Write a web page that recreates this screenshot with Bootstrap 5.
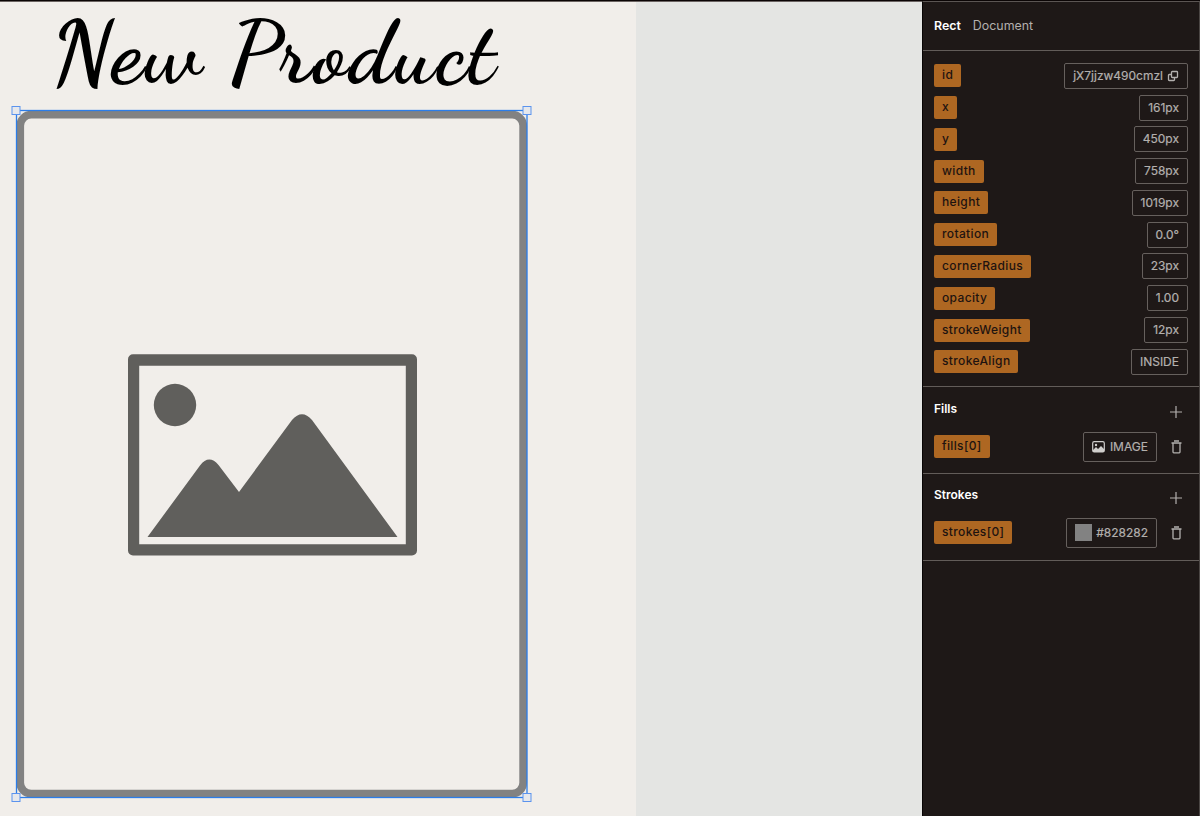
<!DOCTYPE html>
<html lang="en">
<head>
<meta charset="utf-8">
<title>Design editor</title>
<link href="https://cdn.jsdelivr.net/npm/bootstrap@5.3.0/dist/css/bootstrap.min.css" rel="stylesheet">
<style>
body{width:1200px;height:816px;overflow:hidden;background:#e4e5e3;font-family:Inter,"Liberation Sans",sans-serif;font-size:12px;line-height:16px}
.editor{height:816px;border-top:1px solid #0b0505;box-shadow:inset 0 1px #6b6462}
.artboard{width:636px;background:#f1eeea;border-top:1px solid #6b6462}
.artwork{width:636px;height:814px;display:block}
.script-title{font-family:"Dancing Script","Liberation Serif",cursive;font-weight:700;font-size:86px;letter-spacing:1.900px}
.panel{width:278px;background:#1e1817;border-left:1px solid #080505;border-right:1px solid #4b4644;border-top:1px solid #5b5553;color:#b3b0ae}
.rule{border-bottom:1px solid #625c59}
.tabs-row{height:48.500px;padding-left:11px;font-size:12.4px}
.tabs-row .heading{font-size:12.400px}
.heading{color:#fff;font-weight:600;font-size:12px}
.props{height:336.500px;padding:9.500px 11px 0 11px}
.prop{height:31.78px}
.tag{background:#ae6722;color:#1e1310;border-radius:2px;height:23px;padding:0 8px;font-weight:500;font-size:12px;letter-spacing:.36px;line-height:22.500px}
.value{border:1px solid #66605d;border-radius:2px;height:26px;padding:0 8px;line-height:24px;white-space:nowrap;-webkit-text-stroke:.2px #b3b0ae}
.value.tall{height:30px;margin-right:14px}
.group{height:87px;padding:0 11px}
.group-head{height:44px;padding-top:14px}
.group-row{height:30px;margin-top:.5px}
.strokes .group-head{height:43px;padding-top:13px}
.swatch{width:17px;height:17px;background:#828282}
.plus{margin-right:5px}
.bin{margin-right:6px}
svg{flex:none}
</style>
</head>
<body>
<div class="editor d-flex justify-content-between">
  <main class="artboard">
    <svg class="artwork" viewBox="0 2 636 814">
      <text class="script-title" transform="translate(51.500 81) scale(1.045 1.015)">New Product</text>
      <rect x="20.2" y="114.7" width="503" height="679" rx="11" fill="none" stroke="#828282" stroke-width="7.8"/>
      <rect x="16.5" y="110.5" width="510.500" height="687" fill="none" stroke="#2b7de9" stroke-width="1.3"/>
      <g fill="#e6e8ec" stroke="#5b93ee">
        <rect x="12" y="106.500" width="8" height="8"/><rect x="523" y="106.500" width="8" height="8"/>
        <rect x="12" y="793.500" width="8" height="8"/><rect x="523" y="793.500" width="8" height="8"/>
      </g>
      <g fill="#605f5c">
        <path fill-rule="evenodd" d="M133 354.300H412a5 5 0 0 1 5 5V550.500a5 5 0 0 1-5 5H133a5 5 0 0 1-5-5V359.300a5 5 0 0 1 5-5ZM139.200 365.700V544.300H405.800V365.700Z"/>
        <circle cx="175" cy="405" r="21.200"/>
        <path d="M147.500 537 200 465.500Q209 454 218.500 465L239 492 292 420Q302 408.500 312 420L397.500 537Z"/>
      </g>
    </svg>
  </main>
  <aside class="panel">
    <div class="tabs-row rule d-flex align-items-center gap-2"><span class="heading me-1">Rect</span><span>Document</span></div>
    <section class="props rule">
      <div class="prop d-flex align-items-center justify-content-between"><span class="tag">id</span><span class="value d-flex align-items-center gap-1">jX7jjzw490cmzl
        <svg width="12" height="12" viewBox="0 0 12 12" fill="none" stroke="#b3b0ae" stroke-width="1.300"><rect x="4.500" y="1.500" width="6" height="6" rx=".8"/><path d="M4.500 4.500H2.300a.8.8 0 0 0-.8.8V9.700a.8.8 0 0 0 .8.800H6.700a.8.8 0 0 0 .8-.8V7.500"/></svg></span></div>
      <div class="prop d-flex align-items-center justify-content-between"><span class="tag">x</span><span class="value">161px</span></div>
      <div class="prop d-flex align-items-center justify-content-between"><span class="tag">y</span><span class="value">450px</span></div>
      <div class="prop d-flex align-items-center justify-content-between"><span class="tag">width</span><span class="value">758px</span></div>
      <div class="prop d-flex align-items-center justify-content-between"><span class="tag">height</span><span class="value">1019px</span></div>
      <div class="prop d-flex align-items-center justify-content-between"><span class="tag">rotation</span><span class="value">0.0°</span></div>
      <div class="prop d-flex align-items-center justify-content-between"><span class="tag">cornerRadius</span><span class="value">23px</span></div>
      <div class="prop d-flex align-items-center justify-content-between"><span class="tag">opacity</span><span class="value">1.00</span></div>
      <div class="prop d-flex align-items-center justify-content-between"><span class="tag">strokeWeight</span><span class="value">12px</span></div>
      <div class="prop d-flex align-items-center justify-content-between"><span class="tag">strokeAlign</span><span class="value">INSIDE</span></div>
    </section>
    <section class="group rule">
      <div class="group-head d-flex justify-content-between"><span class="heading">Fills</span>
        <svg class="mt-1 plus" width="14" height="14" viewBox="0 0 14 14" stroke="#b3b0ae" stroke-width="1.200"><path d="M1 7H13M7 1V13"/></svg></div>
      <div class="group-row d-flex align-items-center"><span class="tag me-auto">fills[0]</span>
        <span class="value tall d-flex align-items-center gap-1"><svg width="14" height="12" viewBox="0 0 14 12"><rect x=".7" y=".7" width="11.600" height="10.300" rx="1.500" fill="none" stroke="#d0cecc" stroke-width="1.200"/><circle cx="4" cy="4" r="1.200" fill="#d0cecc"/><path d="M1 9 4 6 6 8 9 5 12 8V11H1Z" fill="#d0cecc"/></svg>IMAGE</span>
        <svg class="bin" width="11" height="14" viewBox="0 0 11 14" fill="none" stroke="#b3b0ae" stroke-width="1.300"><path d="M.5 3H10.500M3 1H8M2 3V12a.8.8 0 0 0 .8.800H8.200A.8.8 0 0 0 9 12V3"/></svg></div>
    </section>
    <section class="group strokes rule">
      <div class="group-head d-flex justify-content-between"><span class="heading">Strokes</span>
        <svg class="mt-1 plus" width="14" height="14" viewBox="0 0 14 14" stroke="#b3b0ae" stroke-width="1.200"><path d="M1 7H13M7 1V13"/></svg></div>
      <div class="group-row d-flex align-items-center"><span class="tag me-auto">strokes[0]</span>
        <span class="value tall d-flex align-items-center"><span class="swatch me-1"></span>#828282</span>
        <svg class="bin" width="11" height="14" viewBox="0 0 11 14" fill="none" stroke="#b3b0ae" stroke-width="1.300"><path d="M.5 3H10.500M3 1H8M2 3V12a.8.8 0 0 0 .8.800H8.200A.8.8 0 0 0 9 12V3"/></svg></div>
    </section>
  </aside>
</div>
<script src="https://cdn.jsdelivr.net/npm/bootstrap@5.3.0/dist/js/bootstrap.bundle.min.js"></script>
</body>
</html>
